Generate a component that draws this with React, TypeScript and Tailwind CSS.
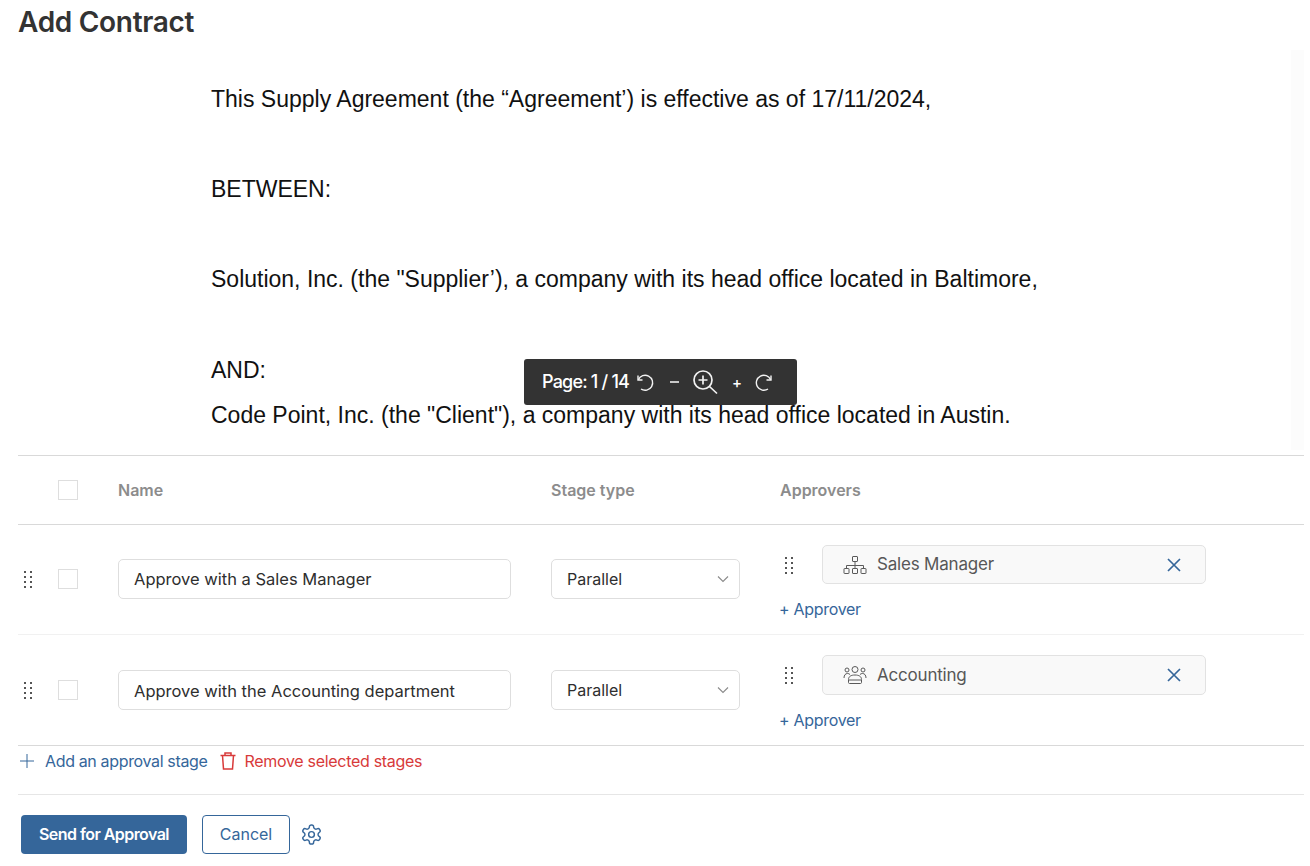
import React from "react";

const BLUE = "#35669a";

function Dots() {
  const d = [0, 1, 2, 3];
  return (
    <svg width="10" height="18" viewBox="0 0 10 18" className="block">
      {d.map((i) => (
        <g key={i} fill="#555">
          <rect x="0" y={1 + i * 5} width="2" height="2" />
          <rect x="6" y={1 + i * 5} width="2" height="2" />
        </g>
      ))}
    </svg>
  );
}

function OrgIcon() {
  return (
    <svg width="24" height="20" viewBox="0 0 24 20" fill="none" stroke="#5a5a5a" strokeWidth="1" className="block">
      <rect x="9.5" y="1.5" width="5" height="5" rx="0.5" />
      <path d="M12 6.5V13M3.5 13.5V10.5H20.5V13.5" />
      <rect x="1" y="13.5" width="5" height="5" rx="0.5" />
      <rect x="9.5" y="13.5" width="5" height="5" rx="0.5" />
      <rect x="18" y="13.5" width="5" height="5" rx="0.5" />
    </svg>
  );
}

function GroupIcon() {
  return (
    <svg width="24" height="20" viewBox="0 0 24 20" fill="none" stroke="#5a5a5a" strokeWidth="1" className="block">
      <circle cx="12" cy="4.5" r="3" />
      <circle cx="4" cy="5" r="2" />
      <circle cx="20" cy="5" r="2" />
      <path d="M1 13c0-3 1.5-4.500 3.500-4.500 1 0 1.800.3 2.500 1M23 13c0-3-1.500-4.500-3.500-4.500-1 0-1.800.3-2.500 1" />
      <path d="M5.500 17.500v-3c0-3 2.500-4.500 6.500-4.500s6.500 1.500 6.500 4.500v3c0 .6-.4 1-1 1h-11c-.6 0-1-.4-1-1z" />
      <path d="M6 15h12" />
    </svg>
  );
}

function CloseIcon() {
  return (
    <svg width="14" height="14" viewBox="0 0 14 14" fill="none" stroke={BLUE} strokeWidth="1.700" className="block">
      <path d="M1 1l12 12M13 1L1 13" />
    </svg>
  );
}

function Checkbox() {
  return <div className="w-5 h-5 border border-[#dedede] bg-white" />;
}

function Row({ name, approver, icon, border, chipH, leftPad, textPad }: { name: string; approver: string; icon: React.ReactNode; border: boolean; chipH: string; leftPad: string; textPad: string }) {
  return (
    <div className={`grid grid-cols-[100px_433px_229px_1fr] h-[110px] ${border ? "border-b border-[#f1f1f1]" : ""}`}>
      <div className={`flex items-center pl-[6px] gap-[24px] ${leftPad}`}>
        <Dots />
        <Checkbox />
      </div>
      <div className={`flex items-center ${leftPad}`}>
        <div className="w-[393px] h-10 border border-[#dedede] rounded-[5px] pl-[15px] pt-[2px] flex items-center text-[16.500px] text-[#2e2e2e]">{name}</div>
      </div>
      <div className={`flex items-center ${leftPad}`}>
        <div className="w-[189px] h-10 border border-[#dedede] rounded-[5px] pl-[15px] pr-[10px] flex items-center justify-between text-[16px] text-[#2e2e2e]">
          Parallel
          <svg width="12" height="8" viewBox="0 0 12 8" fill="none" stroke="#8a8a8a" strokeWidth="1.100">
            <path d="M1 1.500l5 5 5-5" />
          </svg>
        </div>
      </div>
      <div className="flex flex-col pt-[20px]">
        <div className="flex items-center gap-[27px] pl-[5px]">
          <Dots />
          <div className={`w-[384px] ${chipH} bg-[#f9f9f9] border border-[#e2e2e2] rounded-[5px] flex items-center pl-[20px] pr-[24px]`}>
            {icon}
            <span className={`ml-[10px] text-[17px] text-[#575757] tracking-[-0.2px] flex-1 ${textPad}`}>{approver}</span>
            <CloseIcon />
          </div>
        </div>
        <div className="mt-[15px] -ml-[1px] text-[16px] leading-[20px] text-[#35669a] tracking-[-0.3px]">+ Approver</div>
      </div>
    </div>
  );
}

export default function App() {
  return (
    <div className="w-[1310px] h-[866px] bg-white overflow-hidden font-['Inter','Liberation_Sans',sans-serif] pl-[18px] pr-[6px]">
      <h1 className="h-[50px] pt-[4px] text-[28px] leading-[36px] font-semibold text-[#333333] tracking-[-0.3px]">Add Contract</h1>

      <div className="relative h-[406px] border-b border-[#d9d9d9] overflow-hidden">
        <div className="absolute right-0 top-0 w-[13px] h-[400px] bg-[#fcfcfc]" />
        <div className="pl-[193px] pt-[34px] font-['Liberation_Sans',Arial,sans-serif] text-[23px] leading-[30px] text-[#111111]">
          <p>This Supply Agreement (the “Agreement’) is effective as of 17/11/2024,</p>
          <p className="mt-[60px]">BETWEEN:</p>
          <p className="mt-[60px]">Solution, Inc. (the "Supplier’), a company with its head office located in Baltimore,</p>
          <p className="mt-[61px]">AND:</p>
          <p className="mt-[15px]">Code Point, Inc. (the "Client"), a company with its head office located in Austin.</p>
        </div>
        <div className="absolute left-[506px] top-[309px] w-[273px] h-[46px] bg-[#333333] rounded-[3px] flex items-center pl-[18px] text-white">
          <span className="text-[18px] font-medium tracking-[-0.8px] w-[91px] whitespace-nowrap pb-[2px]">Page: 1 / 14</span>
          <svg width="20" height="20" viewBox="0 0 20 20" fill="none" stroke="#f2f2f2" strokeWidth="1.400" className="ml-[2px]">
            <path d="M3 3.500v4.500h4.500" />
            <path d="M3.300 7.700A7.500 7.500 0 1 1 6 17" />
          </svg>
          <span className="ml-[15px] w-[9px] h-[1.500px] bg-[#c8c8c8]" />
          <svg width="28" height="28" viewBox="0 0 28 28" fill="none" stroke="#f2f2f2" strokeWidth="1.700" className="ml-[12px]">
            <circle cx="12" cy="12" r="9" />
            <path d="M12 7.500v9M7.500 12h9M18.500 18.500l7.500 7" />
          </svg>
          <span className="ml-[12px] text-[15px] font-medium leading-none w-[12px] text-center">+</span>
          <svg width="20" height="20" viewBox="0 0 20 20" fill="none" stroke="#f2f2f2" strokeWidth="1.400" className="ml-[11px]">
            <path d="M17 3.500v4.500h-4.500" />
            <path d="M16.700 7.700A7.500 7.500 0 1 0 14 17" />
          </svg>
        </div>
      </div>

      <div className="grid grid-cols-[100px_433px_229px_1fr] h-[69px] border-b border-[#d9d9d9] items-center text-[16px] font-semibold text-[#8c8c8c]">
        <div className="pl-[40px]"><Checkbox /></div>
        <div>Name</div>
        <div>Stage type</div>
        <div>Approvers</div>
      </div>

      <Row name="Approve with a Sales Manager" approver="Sales Manager" icon={<OrgIcon />} border chipH="h-[39px]" leftPad="pb-[2px]" textPad="" />
      <Row name="Approve with the Accounting department" approver="Accounting" icon={<GroupIcon />} border={false} chipH="h-[40px]" leftPad="" textPad="pt-[2px]" />

      <div className="border-t border-[#d9d9d9] h-[49px] flex items-center pb-[18px] text-[16px] tracking-[-0.35px]">
        <svg width="14" height="14" viewBox="0 0 14 14" fill="none" stroke={BLUE} strokeWidth="1" className="ml-[2px]">
          <path d="M7 0v14M0 7h14" />
        </svg>
        <span className="ml-[11px] text-[#35669a]">Add an approval stage</span>
        <svg width="16" height="18" viewBox="0 0 16 18" fill="none" stroke="#d83a3a" strokeWidth="1.500" className="ml-[12px]">
          <path d="M0.500 3.500h15M5 3.500V1h6v2.500M2.500 3.500l1 13.500h9l1-13.500" />
        </svg>
        <span className="ml-[9px] text-[#d83a3a] tracking-[-0.3px]">Remove selected stages</span>
      </div>

      <div className="border-t border-[#e6e6e6] flex items-center pt-[20px] pl-[3px]">
        <div className="w-[166px] h-[39px] pb-[2px] bg-[#35669a] rounded-[4px] text-white text-[16px] font-semibold tracking-[-0.55px] flex items-center justify-center">Send for Approval</div>
        <div className="ml-[15px] w-[88px] h-[39px] pb-[2px] border border-[#35669a] rounded-[4px] text-[#35669a] text-[16px] flex items-center justify-center">Cancel</div>
        <svg width="23" height="23" viewBox="0 0 24 24" fill="none" stroke={BLUE} strokeWidth="1.500" strokeLinecap="round" strokeLinejoin="round" className="ml-[10px]">
          <path d="M12.220 2h-.44a2 2 0 0 0-2 2v.18a2 2 0 0 1-1 1.730l-.43.25a2 2 0 0 1-2 0l-.15-.08a2 2 0 0 0-2.730.73l-.22.38a2 2 0 0 0 .73 2.730l.15.1a2 2 0 0 1 1 1.720v.51a2 2 0 0 1-1 1.740l-.15.09a2 2 0 0 0-.73 2.730l.22.38a2 2 0 0 0 2.730.73l.15-.08a2 2 0 0 1 2 0l.43.25a2 2 0 0 1 1 1.730V20a2 2 0 0 0 2 2h.44a2 2 0 0 0 2-2v-.18a2 2 0 0 1 1-1.730l.43-.25a2 2 0 0 1 2 0l.15.08a2 2 0 0 0 2.730-.73l.22-.39a2 2 0 0 0-.73-2.730l-.15-.08a2 2 0 0 1-1-1.740v-.5a2 2 0 0 1 1-1.740l.15-.09a2 2 0 0 0 .73-2.730l-.22-.38a2 2 0 0 0-2.730-.73l-.15.08a2 2 0 0 1-2 0l-.43-.25a2 2 0 0 1-1-1.730V4a2 2 0 0 0-2-2z" />
          <circle cx="12" cy="12" r="3" />
        </svg>
      </div>
    </div>
  );
}
